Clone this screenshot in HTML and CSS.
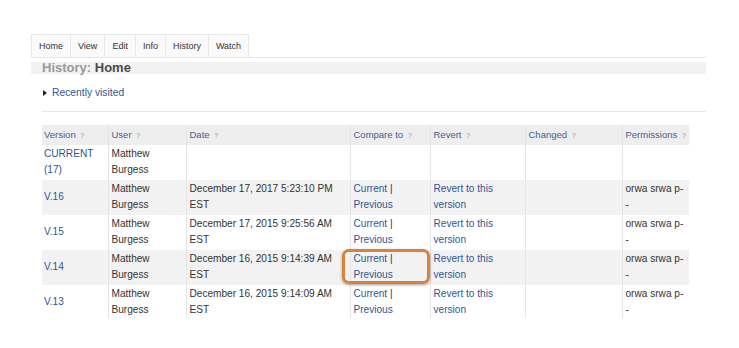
FILE: index.html
```html
<!DOCTYPE html>
<html lang="en">
<head>
    <meta charset="UTF-8">
    <meta name="viewport" content="width=device-width, initial-scale=1.0">
    <title>History: Home</title>
    <link rel="stylesheet" href="styles.css">
</head>
<body>
    <div class="page">
        <ul class="tabs">
            <li>Home</li>
            <li>View</li>
            <li>Edit</li>
            <li>Info</li>
            <li>History</li>
            <li>Watch</li>
        </ul>
        <h1 class="title"><span class="muted">History:</span> Home</h1>
        <div class="content">
            <div class="recent"><span class="arrow"></span><a href="#">Recently visited</a></div>
            <div class="rule"></div>
            <div class="clip">
                <table class="history">
                    <colgroup>
                        <col style="width:66px">
                        <col style="width:78px">
                        <col style="width:164px">
                        <col style="width:80px">
                        <col style="width:95px">
                        <col style="width:97px">
                        <col style="width:67px">
                    </colgroup>
                    <tr>
                        <th>Version <i>?</i></th>
                        <th>User <i>?</i></th>
                        <th>Date <i>?</i></th>
                        <th>Compare to <i>?</i></th>
                        <th>Revert <i>?</i></th>
                        <th>Changed <i>?</i></th>
                        <th>Permissions <i>?</i></th>
                    </tr>
                    <tr>
                        <td><a href="#">CURRENT (17)</a></td>
                        <td>Matthew Burgess</td>
                        <td></td>
                        <td></td>
                        <td></td>
                        <td></td>
                        <td></td>
                    </tr>
                    <tr class="alt">
                        <td class="mid"><a href="#">V.16</a></td>
                        <td>Matthew Burgess</td>
                        <td>December 17, 2017 5:23:10 PM EST</td>
                        <td><a href="#">Current</a> | <a href="#">Previous</a></td>
                        <td><a href="#">Revert to this version</a></td>
                        <td></td>
                        <td>orwa srwa p- -</td>
                    </tr>
                    <tr>
                        <td class="mid"><a href="#">V.15</a></td>
                        <td>Matthew Burgess</td>
                        <td>December 17, 2015 9:25:56 AM EST</td>
                        <td><a href="#">Current</a> | <a href="#">Previous</a></td>
                        <td><a href="#">Revert to this version</a></td>
                        <td></td>
                        <td>orwa srwa p- -</td>
                    </tr>
                    <tr class="alt">
                        <td class="mid"><a href="#">V.14</a></td>
                        <td>Matthew Burgess</td>
                        <td>December 16, 2015 9:14:39 AM EST</td>
                        <td class="marked"><a href="#">Current</a> | <a href="#">Previous</a><span class="callout"></span></td>
                        <td><a href="#">Revert to this version</a></td>
                        <td></td>
                        <td>orwa srwa p- -</td>
                    </tr>
                    <tr>
                        <td class="mid"><a href="#">V.13</a></td>
                        <td>Matthew Burgess</td>
                        <td>December 16, 2015 9:14:09 AM EST</td>
                        <td><a href="#">Current</a> | <a href="#">Previous</a></td>
                        <td><a href="#">Revert to this version</a></td>
                        <td></td>
                        <td>orwa srwa p- -</td>
                    </tr>
                </table>
            </div>
        </div>
    </div>
</body>
</html>
```
FILE: styles.css
```css
body{
    margin: 0;
    background: #fff;
    font-family: "Liberation Sans", Arial, sans-serif;
    color: #333;
}
a{
    color: #2f5596;
    text-decoration: none;
}
.page{
    width: 675px;
    margin-left: 31px;
    padding-top: 34px;
}
.tabs{
    display: flex;
    list-style: none;
    margin: 0;
    padding: 0;
    height: 23px;
    border-bottom: 1px solid #e6e6e6;
}
.tabs li{
    font-size: 9px;
    line-height: 23px;
    padding: 0 7px;
    color: #333;
    background: #fafafa;
    border: 1px solid #e8e8e8;
    border-bottom: none;
    border-left: none;
}
.tabs li:first-child{
    border-left: 1px solid #e8e8e8;
}
.title{
    margin: 4px 0 0;
    height: 12px;
    line-height: 12px;
    padding-left: 11px;
    background: #f2f2f2;
    font-size: 13px;
    font-weight: bold;
    color: #4a4a4a;
}
.title .muted{
    color: #9a9a9a;
}
.content{
    padding-left: 11px;
}
.recent{
    margin-top: 12px;
    height: 14px;
    font-size: 10.3px;
    line-height: 14px;
    display: flex;
    align-items: center;
}
.arrow{
    width: 0;
    height: 0;
    border-top: 3px solid transparent;
    border-bottom: 3px solid transparent;
    border-left: 4px solid #222;
    margin: 0 5px 0 1px;
}
.rule{
    margin-top: 11px;
    border-top: 1px solid #e6e6e6;
}
.clip{
    margin-top: 13px;
    height: 193px;
    overflow: hidden;
}
.history{
    border-collapse: collapse;
    table-layout: fixed;
    width: 647px;
    font-size: 10.1px;
    line-height: 16px;
}
.history th{
    background: #eeeeee;
    color: #3f5f94;
    font-weight: normal;
    font-size: 9.5px;
    text-align: left;
    height: 20px;
    padding: 0 3px;
    border-left: 1px solid #e4e4e4;
    white-space: nowrap;
}
.history th:first-child,
.history td:first-child{
    border-left: none;
    padding-left: 2px;
}
.history th i{
    font-style: normal;
    font-size: 7px;
    color: #999;
    margin-left: 2px;
}
.history td{
    vertical-align: top;
    padding: 1px 3px 2px;
    height: 32px;
    border-left: 1px solid #e4e4e4;
}
.history td.mid{
    vertical-align: middle;
}
.history tr.alt td{
    background: #f2f2f2;
}
.history td.marked{
    position: relative;
}
.callout{
    position: absolute;
    left: -9px;
    top: -1px;
    width: 82px;
    height: 29px;
    border: 3px solid #d9823c;
    border-radius: 7px;
    box-shadow: 0 1px 3px rgba(0,0,0,0.35);
    pointer-events: none;
}
```
